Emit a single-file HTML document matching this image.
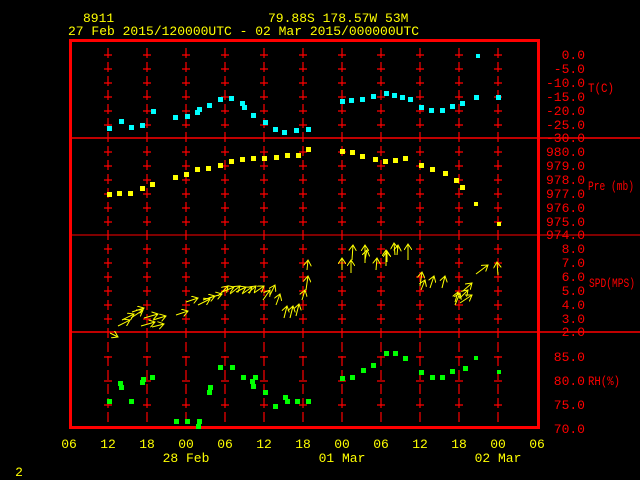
<!DOCTYPE html>
<html><head><style>
html,body{margin:0;padding:0;background:#000;width:640px;height:480px;overflow:hidden}
svg{display:block}
text{font-family:"Liberation Mono",monospace;font-size:13px}
</style></head><body>
<svg width="640" height="480" viewBox="0 0 640 480">
<defs>
<marker id="ah" markerWidth="8" markerHeight="8" refX="6" refY="4" orient="auto" markerUnits="userSpaceOnUse">
<path d="M0,0 L6,4 L0,8" fill="none" stroke="#ff0" stroke-width="1"/>
</marker>
<g id="col" stroke="#f00" stroke-width="1.2">
<line x1="0" y1="48" x2="0" y2="428" stroke-dasharray="10,4"/>
<path d="M-4,55h8M-4,69h8M-4,83h8M-4,97h8M-4,111h8M-4,125h8M-4,152h8M-4,166h8M-4,180h8M-4,194h8M-4,208h8M-4,222h8M-4,249h8M-4,263h8M-4,277h8M-4,291h8M-4,305h8M-4,319h8M-4,357h8M-4,381h8M-4,405h8"/>
</g>
</defs>
<g fill="#ff0">
<text x="83" y="22">8911</text>
<text x="268" y="22">79.88S  178.57W    53M</text>
<text x="68" y="35">27 Feb 2015/120000UTC - 02 Mar 2015/000000UTC</text>
</g>
<use href="#col" x="108"/><use href="#col" x="147"/><use href="#col" x="186"/><use href="#col" x="225"/><use href="#col" x="264"/><use href="#col" x="303"/><use href="#col" x="342"/><use href="#col" x="381"/><use href="#col" x="420"/><use href="#col" x="459"/><use href="#col" x="498"/>
<g stroke="#f00" stroke-width="1.5">
<line x1="70" y1="138" x2="640" y2="138"/>
<line x1="70" y1="235" x2="640" y2="235" stroke-width="1"/>
<line x1="70" y1="332" x2="640" y2="332"/>
</g>
<rect x="70.5" y="40.5" width="468" height="387" fill="none" stroke="#f00" stroke-width="3"/>
<g fill="#f00" font-size="11" text-anchor="end">
<text x="585" y="59">0.0</text><text x="585" y="73">-5.0</text><text x="585" y="87">-10.0</text><text x="585" y="101">-15.0</text><text x="585" y="115">-20.0</text><text x="585" y="129">-25.0</text><text x="585" y="142">-30.0</text>
<text x="585" y="156">980.0</text><text x="585" y="170">979.0</text><text x="585" y="184">978.0</text><text x="585" y="198">977.0</text><text x="585" y="212">976.0</text><text x="585" y="226">975.0</text><text x="585" y="239">974.0</text>
<text x="585" y="253">8.0</text><text x="585" y="267">7.0</text><text x="585" y="281">6.0</text><text x="585" y="295">5.0</text><text x="585" y="309">4.0</text><text x="585" y="323">3.0</text><text x="585" y="336">2.0</text>
<text x="585" y="361">85.0</text><text x="585" y="385">80.0</text><text x="585" y="409">75.0</text><text x="585" y="433">70.0</text>
</g>
<g fill="#f00" font-size="11">
<text x="588" y="92" textLength="26" lengthAdjust="spacingAndGlyphs">T(C)</text>
<text x="588" y="190" textLength="46" lengthAdjust="spacingAndGlyphs">Pre (mb)</text>
<text x="589" y="287" textLength="46" lengthAdjust="spacingAndGlyphs">SPD(MPS)</text>
<text x="588" y="385" textLength="32" lengthAdjust="spacingAndGlyphs">RH(%)</text>
</g>
<g fill="#0ff">
<rect x="107" y="126" width="5" height="5"/><rect x="119" y="119" width="5" height="5"/><rect x="129" y="125" width="5" height="5"/><rect x="140" y="123" width="5" height="5"/><rect x="151" y="109" width="5" height="5"/><rect x="173" y="115" width="5" height="5"/><rect x="185" y="114" width="5" height="5"/><rect x="195" y="110" width="5" height="5"/><rect x="197" y="107" width="5" height="5"/><rect x="207" y="103" width="5" height="5"/><rect x="218" y="97" width="5" height="5"/><rect x="229" y="96" width="5" height="5"/><rect x="240" y="101" width="5" height="5"/><rect x="242" y="105" width="5" height="5"/><rect x="251" y="113" width="5" height="5"/><rect x="263" y="120" width="5" height="5"/><rect x="273" y="127" width="5" height="5"/><rect x="282" y="130" width="5" height="5"/><rect x="294" y="128" width="5" height="5"/><rect x="306" y="127" width="5" height="5"/>
<rect x="340" y="99" width="5" height="5"/><rect x="349" y="98" width="5" height="5"/><rect x="360" y="97" width="5" height="5"/><rect x="371" y="94" width="5" height="5"/><rect x="384" y="91" width="5" height="5"/><rect x="392" y="93" width="5" height="5"/><rect x="400" y="95" width="5" height="5"/><rect x="408" y="97" width="5" height="5"/><rect x="419" y="105" width="5" height="5"/><rect x="429" y="108" width="5" height="5"/><rect x="440" y="108" width="5" height="5"/><rect x="450" y="104" width="5" height="5"/><rect x="460" y="101" width="5" height="5"/><rect x="474" y="95" width="5" height="5"/><rect x="496" y="95" width="5" height="5"/><rect x="476" y="54" width="4" height="4"/>
</g>
<g fill="#ff0">
<rect x="107" y="192" width="5" height="5"/><rect x="117" y="191" width="5" height="5"/><rect x="128" y="191" width="5" height="5"/><rect x="140" y="186" width="5" height="5"/><rect x="150" y="182" width="5" height="5"/><rect x="173" y="175" width="5" height="5"/><rect x="184" y="172" width="5" height="5"/><rect x="195" y="167" width="5" height="5"/><rect x="206" y="166" width="5" height="5"/><rect x="218" y="163" width="5" height="5"/><rect x="229" y="159" width="5" height="5"/><rect x="240" y="157" width="5" height="5"/><rect x="251" y="156" width="5" height="5"/><rect x="262" y="156" width="5" height="5"/><rect x="274" y="155" width="5" height="5"/><rect x="285" y="153" width="5" height="5"/><rect x="296" y="153" width="5" height="5"/><rect x="306" y="147" width="5" height="5"/>
<rect x="340" y="149" width="5" height="5"/><rect x="350" y="150" width="5" height="5"/><rect x="360" y="154" width="5" height="5"/><rect x="373" y="157" width="5" height="5"/><rect x="383" y="159" width="5" height="5"/><rect x="393" y="158" width="5" height="5"/><rect x="403" y="156" width="5" height="5"/><rect x="419" y="163" width="5" height="5"/><rect x="430" y="167" width="5" height="5"/><rect x="443" y="171" width="5" height="5"/><rect x="454" y="178" width="5" height="5"/><rect x="460" y="185" width="5" height="5"/><rect x="474" y="202" width="4" height="4"/><rect x="497" y="222" width="4" height="4"/>
</g>
<g fill="#0f0">
<rect x="107" y="399" width="5" height="5"/><rect x="119" y="385" width="5" height="5"/><rect x="118" y="381" width="5" height="5"/><rect x="129" y="399" width="5" height="5"/><rect x="140" y="380" width="5" height="5"/><rect x="141" y="377" width="5" height="5"/><rect x="150" y="375" width="5" height="5"/><rect x="174" y="419" width="5" height="5"/><rect x="185" y="419" width="5" height="5"/><rect x="197" y="419" width="5" height="5"/><rect x="196" y="424" width="5" height="5"/><rect x="207" y="390" width="5" height="5"/><rect x="208" y="385" width="5" height="5"/><rect x="218" y="365" width="5" height="5"/><rect x="230" y="365" width="5" height="5"/><rect x="241" y="375" width="5" height="5"/><rect x="251" y="384" width="5" height="5"/><rect x="253" y="375" width="5" height="5"/><rect x="250" y="379" width="5" height="5"/><rect x="263" y="390" width="5" height="5"/><rect x="273" y="404" width="5" height="5"/><rect x="283" y="395" width="5" height="5"/><rect x="285" y="399" width="5" height="5"/><rect x="295" y="399" width="5" height="5"/><rect x="306" y="399" width="5" height="5"/>
<rect x="340" y="376" width="5" height="5"/><rect x="350" y="375" width="5" height="5"/><rect x="361" y="368" width="5" height="5"/><rect x="371" y="363" width="5" height="5"/><rect x="384" y="351" width="5" height="5"/><rect x="393" y="351" width="5" height="5"/><rect x="403" y="356" width="5" height="5"/><rect x="419" y="370" width="5" height="5"/><rect x="430" y="375" width="5" height="5"/><rect x="440" y="375" width="5" height="5"/><rect x="450" y="369" width="5" height="5"/><rect x="463" y="366" width="5" height="5"/><rect x="474" y="356" width="4" height="4"/><rect x="497" y="370" width="4" height="4"/>
</g>
<g stroke="#ff0" stroke-width="1" marker-end="url(#ah)">
<path d="M110,333 L118,337"/><path d="M118,326 L130,320"/><path d="M122,320 L134,314"/><path d="M131,318 L143,310"/><path d="M132,312 L144,308"/><path d="M141,326 L155,322"/><path d="M144,318 L158,314"/><path d="M152,327 L164,324"/><path d="M153,320 L166,316"/>
<path d="M176,315 L188,311"/><path d="M186,302 L198,298"/><path d="M198,305 L210,299"/><path d="M203,300 L215,296"/><path d="M209,298 L222,294"/><path d="M218,296 L228,286"/><path d="M222,292 L234,287"/><path d="M230,294 L240,286"/><path d="M236,292 L246,287"/><path d="M242,294 L252,287"/><path d="M248,293 L256,286"/><path d="M254,293 L264,286"/><path d="M263,300 L270,290"/><path d="M270,295 L275,285"/><path d="M276,305 L280,294"/><path d="M284,318 L287,306"/><path d="M290,318 L293,306"/><path d="M296,316 L299,304"/><path d="M302,300 L305,290"/><path d="M306,290 L308,276"/><path d="M307,270 L308,260"/>
<path d="M342,270 L342,258"/><path d="M351,273 L351,260"/><path d="M352,260 L353,245"/><path d="M365,263 L365,245"/><path d="M365,260 L367,250"/><path d="M376,270 L377,258"/><path d="M386,266 L386,250"/><path d="M387,262 L387,251"/><path d="M395,255 L394,243"/><path d="M397,255 L398,245"/><path d="M408,260 L408,244"/><path d="M420,286 L422,272"/><path d="M421,290 L425,280"/><path d="M430,288 L434,276"/><path d="M442,288 L445,276"/><path d="M455,302 L458,292"/><path d="M455,305 L460,293"/><path d="M460,298 L468,290"/><path d="M463,291 L472,283"/><path d="M460,303 L472,295"/><path d="M476,274 L488,265"/><path d="M498,275 L497,262"/>
</g>
<g fill="#ff0" text-anchor="middle">
<text x="69" y="448">06</text><text x="108" y="448">12</text><text x="147" y="448">18</text><text x="186" y="448">00</text><text x="225" y="448">06</text><text x="264" y="448">12</text><text x="303" y="448">18</text><text x="342" y="448">00</text><text x="381" y="448">06</text><text x="420" y="448">12</text><text x="459" y="448">18</text><text x="498" y="448">00</text><text x="537" y="448">06</text>
<text x="186" y="462">28 Feb</text><text x="342" y="462">01 Mar</text><text x="498" y="462">02 Mar</text>
<text x="19" y="476">2</text>
</g>
</svg>
</body></html>
